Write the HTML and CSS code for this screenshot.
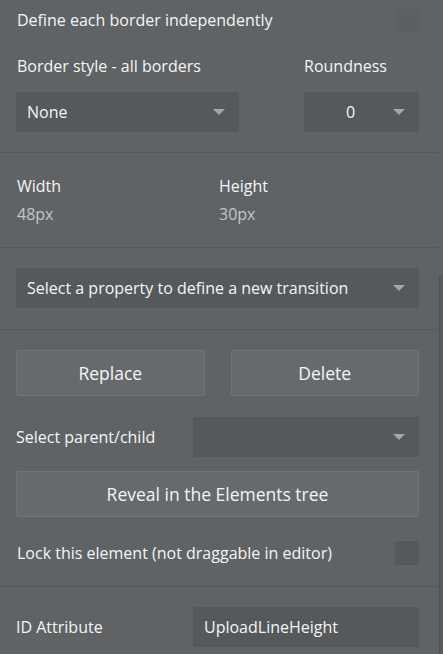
FILE: index.html
```html
<!DOCTYPE html>
<html>
<head>
<meta charset="utf-8">
<link rel="stylesheet" href="styles.css">
</head>
<body>
<div class="panel">
  <div class="section s1">
    <div class="row-check">
      <span class="label">Define each border independently</span>
      <span class="check faint"></span>
    </div>
    <div class="grid-border labels">
      <span class="label">Border style - all borders</span>
      <span class="label">Roundness</span>
    </div>
    <div class="grid-border">
      <div class="dropdown"><span class="dd-text">None</span><span class="arrow"></span></div>
      <div class="dropdown center"><span class="dd-text">0</span><span class="arrow"></span></div>
    </div>
  </div>
  <div class="section s2">
    <div class="grid-size">
      <span class="label">Width</span>
      <span class="label">Height</span>
      <span class="value">48px</span>
      <span class="value">30px</span>
    </div>
  </div>
  <div class="section s3">
    <div class="dropdown"><span class="dd-text">Select a property to define a new transition</span><span class="arrow"></span></div>
  </div>
  <div class="section s4">
    <div class="btn-row">
      <div class="btn">Replace</div>
      <div class="btn">Delete</div>
    </div>
    <div class="field-row parent-row">
      <span class="label">Select parent/child</span>
      <div class="dropdown"><span class="dd-text"></span><span class="arrow"></span></div>
    </div>
    <div class="btn reveal">Reveal in the Elements tree</div>
    <div class="row-check lock-row">
      <span class="label">Lock this element (not draggable in editor)</span>
      <span class="check"></span>
    </div>
  </div>
  <div class="section s5">
    <div class="field-row">
      <span class="label">ID Attribute</span>
      <div class="input">UploadLineHeight</div>
    </div>
  </div>
</div>
<div class="scrollbar"></div>
</body>
</html>
```
FILE: styles.css
```css
html, body {
  margin: 0;
  padding: 0;
  background: #5f6366;
  height: 654px;
  overflow: hidden;
}
body {
  font-family: "Open Sans", "Noto Sans", sans-serif;
  color: #f4f5f5;
  font-size: 16px;
  position: relative;
}
.panel {
  width: 439px;
}
.section {
  padding: 0 20px 0 16px;
  border-bottom: 1px solid #55595c;
}
.label {
  line-height: 20px;
  white-space: nowrap;
}
.s1 { padding-top: 8px; padding-bottom: 20px; }
.row-check {
  display: flex;
  align-items: center;
  justify-content: space-between;
  height: 24px;
  padding-left: 1px;
}
.check {
  width: 24px;
  height: 24px;
  background: #54585b;
  border-radius: 1px;
}
.check.faint {
  background: #5c6063;
  height: 23px;
}
.grid-border {
  display: grid;
  grid-template-columns: 223px 115px;
  column-gap: 65px;
}
.grid-border.labels {
  margin: 24px 0 16px;
  padding-left: 1px;
}
.grid-border.labels .label + .label { margin-left: -1px; }
.dropdown {
  height: 40px;
  background: #55595c;
  display: flex;
  align-items: center;
  padding: 0 14px 0 11px;
  box-sizing: border-box;
}
.dd-text { flex: 1; white-space: nowrap; }
.dropdown.center .dd-text { text-align: center; padding-right: 7px; }
.arrow {
  width: 0;
  height: 0;
  border-left: 6px solid transparent;
  border-right: 6px solid transparent;
  border-top: 6px solid #a3a6a9;
}
.s2 { padding-top: 23px; padding-bottom: 23px; }
.grid-size {
  display: grid;
  grid-template-columns: 202px 1fr;
  row-gap: 8px;
  padding-left: 1px;
}
.value {
  color: #c3c6c8;
  line-height: 20px;
}
.s3 { padding-top: 20px; padding-bottom: 21px; }
.s4 { padding-top: 20px; padding-bottom: 21px; }
.btn-row {
  display: grid;
  grid-template-columns: 1fr 1fr;
  column-gap: 26px;
}
.btn {
  height: 46px;
  box-sizing: border-box;
  background: #666a6d;
  border: 1px solid #717578;
  border-radius: 2px;
  display: flex;
  align-items: center;
  justify-content: center;
  font-size: 17.5px;
}
.field-row {
  display: grid;
  grid-template-columns: 177px 1fr;
  align-items: center;
}
.parent-row { margin: 21px 0 14px; }
.lock-row { margin-top: 24px; }
.s5 { padding-top: 20px; padding-bottom: 20px; border-bottom: none; }
.input {
  height: 40px;
  background: #55595c;
  display: flex;
  align-items: center;
  padding-left: 11px;
  font-size: 16px;
}
.scrollbar {
  position: absolute;
  left: 439px;
  top: 275px;
  width: 4px;
  height: 379px;
  background: #575b5e;
  border-left: 1px solid #505457;
  box-sizing: border-box;
}
```
